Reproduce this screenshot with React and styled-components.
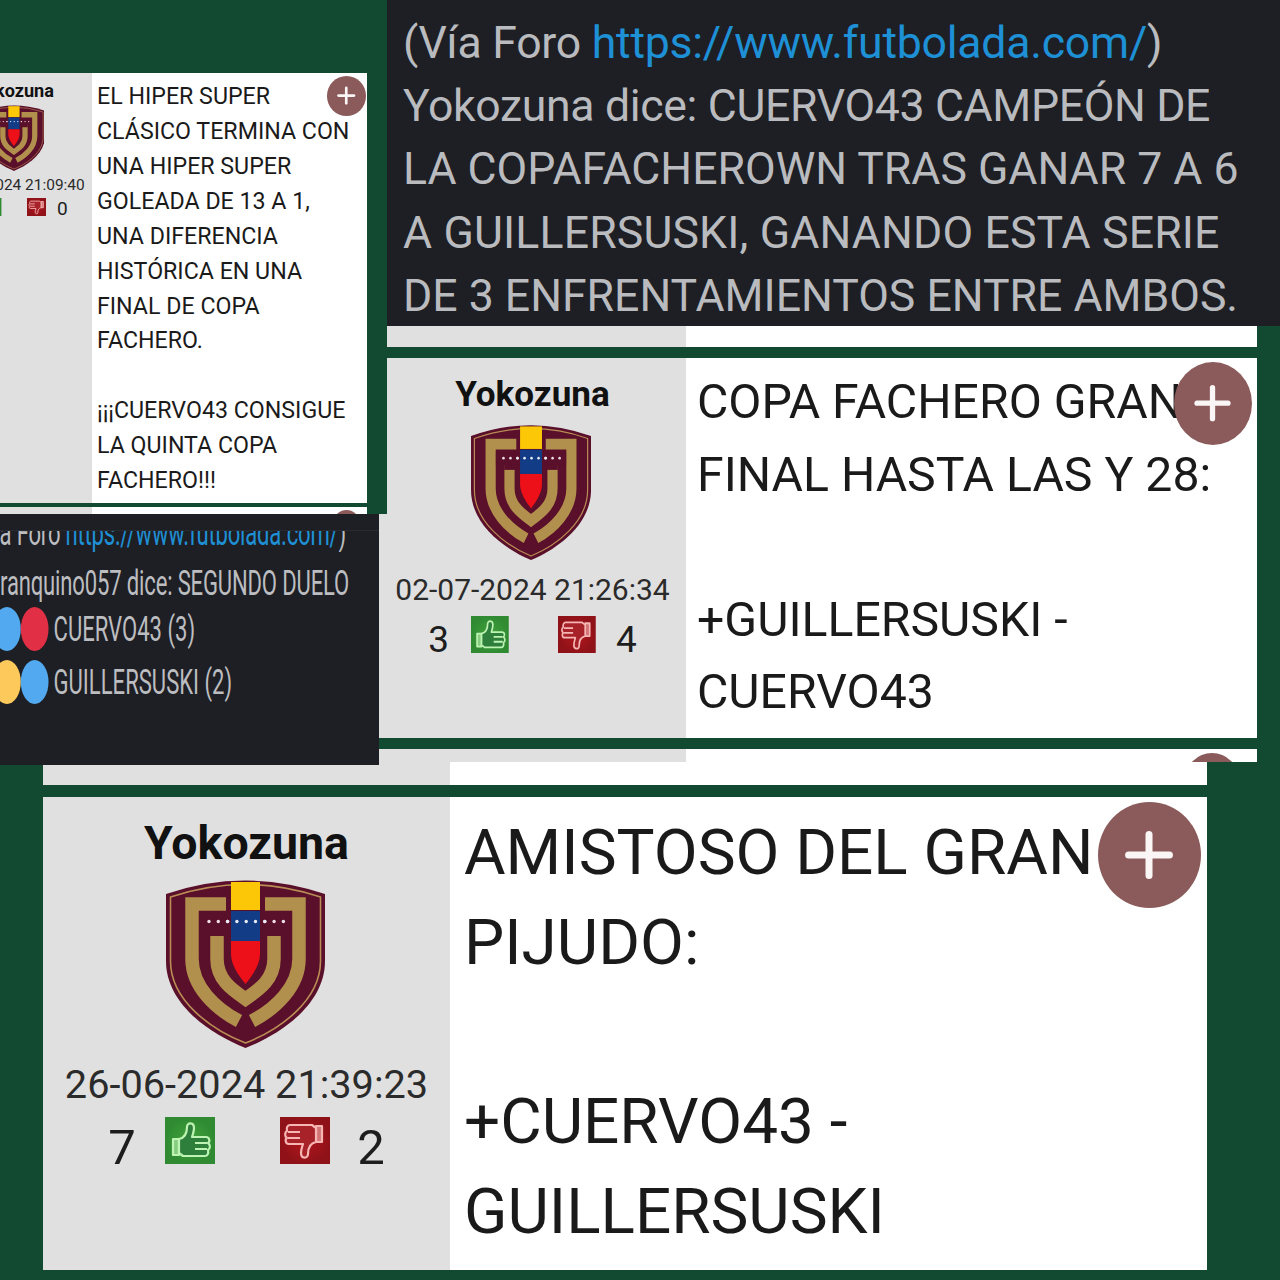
import React from 'react'
import styled, { createGlobalStyle } from 'styled-components'
import { Plus } from 'lucide-react'

const GREEN = '#114a31'

const Global = createGlobalStyle`
  html, body { margin: 0; padding: 0; background: ${GREEN}; }
  body { font-family: Roboto, "Liberation Sans", sans-serif; }
`

const Canvas = styled.div`
  position: relative;
  width: 1280px;
  height: 1280px;
  overflow: hidden;
  background: ${GREEN};
`

// every shot is one pasted screenshot of the collage, the place is the content
const Shot = styled.section`
  position: absolute;
  left: ${p => p.$x}px;
  top: ${p => p.$y}px;
  width: ${p => p.$w}px;
  height: ${p => p.$ht}px;
  z-index: ${p => p.$z};
  overflow: hidden;
  background: ${p => p.$bg || GREEN};
  display: flex;
  flex-direction: column;
  box-sizing: border-box;
`

const Strip = styled.div`
  position: relative;
  flex: none;
  height: ${p => p.$ht}px;
  margin-top: ${p => p.$gap || 0}px;
  margin-left: ${p => p.$inset || 0}px;
  width: ${p => p.$w}px;
  overflow: hidden;
  background: linear-gradient(to right, #e0e0e0 ${p => p.$col}px, #fff ${p => p.$col}px);
`

const Peek = styled.span`
  position: absolute;
  left: ${p => p.$x}px;
  top: ${p => p.$top}px;
  width: ${p => p.$d}px;
  height: ${p => p.$d}px;
  border-radius: 50%;
  background: #8b5b5b;
`

const Post = styled.article`
  --h: ${p => p.$h}px;
  --v: ${p => p.$v}px;
  position: relative;
  flex: none;
  display: grid;
  grid-template-columns: ${p => p.$col}px 1fr;
  width: ${p => p.$w}px;
  height: ${p => p.$ht}px;
  margin-top: ${p => p.$gap || 0}px;
  margin-left: ${p => p.$inset || 0}px;
  background: #fff;
`

const Side = styled.div`
  display: flex;
  flex-direction: column;
  align-items: center;
  padding-top: calc(24 * var(--v));
  background: #e0e0e0;
  min-width: 0;
`

const Name = styled.div`
  height: calc(44 * var(--v));
  line-height: calc(44 * var(--v));
  font-size: calc(46.5 * var(--h));
  font-weight: 700;
  color: #111;
  white-space: nowrap;
`

const Crest = styled.svg`
  flex: none;
  display: block;
  width: calc(159 * var(--h));
  height: calc(169 * var(--v));
  margin-top: calc(14 * var(--v));
  margin-right: calc(3 * var(--h));
`

const When = styled.div`
  height: calc(40 * var(--v));
  line-height: calc(40 * var(--v));
  margin-top: calc(17 * var(--v));
  font-size: calc(39.7 * var(--h));
  color: #2b2b2b;
  white-space: nowrap;
`

const Votes = styled.div`
  display: flex;
  align-items: center;
  justify-content: center;
  height: calc(47 * var(--v));
  margin-top: calc(12 * var(--v));
`

const Count = styled.span`
  width: calc(30 * var(--h));
  text-align: center;
  font-size: calc(49 * var(--h));
  line-height: calc(47 * var(--v));
  color: #1d1d1d;
  margin: ${p => (p.$right ? '0 0 0 calc(26 * var(--h))' : '0 calc(28 * var(--h)) 0 0')};
  position: relative;
  top: calc(7 * var(--v));
`

const VoteBox = styled.svg`
  flex: none;
  display: block;
  width: calc(50 * var(--h));
  height: calc(47 * var(--v));
  margin-left: ${p => (p.$down ? 'calc(65 * var(--h))' : '0')};
`

const Body = styled.div`
  padding: ${p => p.$pad}px 0 0 ${p => p.$left}px;
  font-size: ${p => p.$font}px;
  line-height: ${p => p.$line}px;
  color: #1a1a1a;
  white-space: pre;
  overflow: hidden;
`

const AddButton = styled.button`
  position: absolute;
  top: ${p => p.$top}px;
  right: ${p => p.$right}px;
  width: ${p => p.$dw}px;
  height: ${p => p.$dh}px;
  border: 0;
  padding: 0;
  border-radius: 50%;
  background: #8b5b5b;
  color: #fbf6f6;
  display: flex;
  align-items: center;
  justify-content: center;
  svg {
    width: 68%;
    height: 68%;
    stroke-width: 2.4;
  }
`

const BigChat = styled.div`
  padding-top: 12px;
  padding-left: 16px;
  font-size: 44.6px;
  line-height: 63.2px;
  color: #b9bbbf;
`

const BigLine = styled.div`
  white-space: pre;
  letter-spacing: ${p => p.$track || 0}px;
`

const Link = styled.a`
  color: #1e90d6;
`

const Squeezed = styled.div`
  width: 610px;
  transform: scaleX(0.63);
  transform-origin: 0 0;
  color: #bcbdc0;
  font-size: 35px;
  white-space: nowrap;
`

const ClippedLine = styled.div`
  height: 22px;
  margin: 16px 0 0 -43px;
  overflow: hidden;
  line-height: 44px;
  letter-spacing: -0.3px;
  border-top: 1px solid #2a2b30;
  box-sizing: border-box;
  div {
    margin-top: -19px;
  }
`

const ChatLine = styled.div`
  display: flex;
  align-items: center;
  height: ${p => p.$ht}px;
  margin-top: ${p => p.$gap || 0}px;
  margin-left: ${p => p.$left || 0}px;
  letter-spacing: ${p => p.$track || 0}px;
  gap: 8px;
`

const Dots = styled.span`
  display: flex;
  flex: none;
`

const Dot = styled.i`
  display: block;
  width: 44px;
  height: 44px;
  border-radius: 50%;
  background: ${p => p.$c};
`

const BLUE = '#52a9ef'
const RED = '#e12f46'
const YELLOW = '#fdc95b'

function ShieldArt() {
  const stars = Array.from({ length: 9 }, (_, i) => 43 + i * 9.3)
  const gold = '#b18f4c'
  const wine = '#5a0f2a'
  return (
    <Crest viewBox="0 0 159 169" preserveAspectRatio="none">
      <path d="M0 15Q79 -12 159 15L159 82C159 125 115 155 79.5 169C44 155 0 125 0 82Z" fill={wine} />
      <path d="M4.5 18Q79 -7 154.5 18L154.5 82C154.5 122 113 151 79.5 164C46 151 4.5 122 4.5 82Z" fill="none" stroke="#b98d55" strokeWidth="1.6" />
      <g fill="none" stroke={gold} strokeWidth="13.5">
        <path d="M60 25L26 25L26 80C26 108 50 130 73 142" />
        <path d="M99 25L133 25L133 80C133 108 109 130 86 142" />
        <path d="M51 50L51 80C51 100 65 110 79.5 120C94 110 108 100 108 80L108 50" />
      </g>
      <rect x="33" y="35" width="93" height="16" fill={wine} />
      <rect x="44" y="50" width="71" height="7" fill={wine} />
      <path d="M60 56L99 56L99 78C99 92 88 103 79.5 111C71 103 60 92 60 78Z" fill={wine} />
      {stars.map(x => (
        <circle key={x} cx={x} cy="42.5" r="1.7" fill="#f0dfe6" />
      ))}
      <rect x="65" y="3" width="29" height="28" fill="#fcc707" />
      <rect x="65" y="32" width="29" height="30" fill="#123c86" />
      {stars.slice(2, 7).map(x => (
        <circle key={x} cx={x} cy="42.5" r="1.7" fill="#e8ecf5" />
      ))}
      <path d="M65 62L94 62L94 75C94 86 86 97 79.5 105C73 97 65 86 65 75Z" fill="#ee1018" />
    </Crest>
  )
}

function ThumbBox({ down }) {
  const a = down ? '#b3161e' : '#43a33c'
  const b = down ? '#8f1218' : '#2f8a32'
  const line = down ? '#f6b6b4' : '#bdf3b3'
  const inner = down ? '#a8222a' : '#2f7f3c'
  const id = down ? 'boxDown' : 'boxUp'
  return (
    <VoteBox viewBox="0 0 50 47" preserveAspectRatio="none" $down={down}>
      <defs>
        <radialGradient id={id}>
          <stop offset="0" stopColor={a} />
          <stop offset="1" stopColor={b} />
        </radialGradient>
      </defs>
      <rect width="50" height="47" fill={`url(#${id})`} />
      <g transform={down ? 'rotate(180 25 23.5)' : undefined} stroke={line} strokeWidth="2.2" strokeLinejoin="round">
        <path d="M8 22h6v16h-6z" fill={line} fillOpacity="0.6" />
        <path
          d="M14 22C19 21 22 17 22 10C22 5 29 5 29 11C29 14 28 17 27 20L41 20C45 20 45 25 43 26C46 28 45 32 43 33C44 37 42 39 40 39L18 39L14 36Z"
          fill={inner}
        />
        <path d="M30 26L42 26M30 32L42 32" fill="none" />
      </g>
    </VoteBox>
  )
}

function ForumPost({ user, date, up, down, text, h, v, col, w, ht, gap, inset, font, line, pad, left, btn }) {
  return (
    <Post $h={h} $v={v} $col={col} $w={w} $ht={ht} $gap={gap} $inset={inset}>
      <Side>
        <Name>{user}</Name>
        <ShieldArt />
        <When>{date}</When>
        <Votes>
          <Count>{up}</Count>
          <ThumbBox />
          <ThumbBox down />
          <Count $right>{down}</Count>
        </Votes>
      </Side>
      <Body $font={font} $line={line} $pad={pad} $left={left}>{text}</Body>
      <AddButton {...btn}>
        <Plus />
      </AddButton>
    </Post>
  )
}

export default function App() {
  return (
    <Canvas>
      <Global />

      <Shot $x={379} $y={326} $w={878} $ht={436} $z={1}>
        <Strip $ht={21} $w={878} $col={307} />
        <ForumPost
          user="Yokozuna"
          date="02-07-2024 21:26:34"
          up="3"
          down="4"
          text={'COPA FACHERO GRAN\nFINAL HASTA LAS Y 28:\n\n+GUILLERSUSKI -\nCUERVO43'}
          h={0.755}
          v={0.805}
          col={307}
          w={878}
          ht={380}
          gap={11}
          font={48.2}
          line={72.6}
          pad={8}
          left={11}
          btn={{ $top: 4, $right: 5, $dw: 78, $dh: 83 }}
        />
        <Strip $ht={13} $w={878} $col={307} $gap={11}>
          <Peek $x={806} $top={4} $d={54} />
        </Strip>
      </Shot>

      <Shot $x={0} $y={762} $w={1280} $ht={518} $z={2}>
        <Strip $ht={23} $w={1164} $inset={43} $col={407} />
        <ForumPost
          user="Yokozuna"
          date="26-06-2024 21:39:23"
          up="7"
          down="2"
          text={'AMISTOSO DEL GRAN\nPIJUDO:\n\n+CUERVO43 -\nGUILLERSUSKI'}
          h={1}
          v={1}
          col={407}
          w={1164}
          ht={473}
          gap={12}
          inset={43}
          font={63.8}
          line={89.8}
          pad={11}
          left={14}
          btn={{ $top: 5, $right: 6, $dw: 103, $dh: 106 }}
        />
      </Shot>

      <Shot $x={387} $y={0} $w={893} $ht={326} $z={3} $bg="#1e1f24">
        <BigChat>
          <BigLine $track={-0.25}>(Vía Foro <Link>https://www.futbolada.com/</Link>)</BigLine>
          <BigLine $track={-0.35}>Yokozuna dice: CUERVO43 CAMPEÓN DE</BigLine>
          <BigLine>LA COPAFACHEROWN TRAS GANAR 7 A 6</BigLine>
          <BigLine $track={0.15}>A GUILLERSUSKI, GANANDO ESTA SERIE</BigLine>
          <BigLine>DE 3 ENFRENTAMIENTOS ENTRE AMBOS.</BigLine>
        </BigChat>
      </Shot>

      <Shot $x={0} $y={0} $w={387} $ht={514} $z={4}>
        <ForumPost
          user="Yokozuna"
          date="07-07-2024 21:09:40"
          up="5"
          down="0"
          text={'EL HIPER SUPER\nCLÁSICO TERMINA CON\nUNA HIPER SUPER\nGOLEADA DE 13 A 1,\nUNA DIFERENCIA\nHISTÓRICA EN UNA\nFINAL DE COPA\nFACHERO.\n\n¡¡¡CUERVO43 CONSIGUE\nLA QUINTA COPA\nFACHERO!!!'}
          h={0.389}
          v={0.39}
          col={156}
          w={431}
          ht={430}
          gap={73}
          inset={-64}
          font={23.2}
          line={34.92}
          pad={6}
          left={5}
          btn={{ $top: 3, $right: 1, $dw: 39, $dh: 40 }}
        />
        <Strip $ht={7} $w={367} $col={92} $gap={4}>
          <Peek $x={333} $top={3} $d={27} />
        </Strip>
      </Shot>

      <Shot $x={0} $y={514} $w={379} $ht={251} $z={5} $bg="#1e1f24">
        <Squeezed>
          <ClippedLine>
            <div>(Vía Foro <Link>https://www.futbolada.com/</Link>)</div>
          </ClippedLine>
          <ChatLine $ht={42} $gap={10} $track={-0.25}>ranquino057 dice: SEGUNDO DUELO</ChatLine>
          <ChatLine $ht={50} $left={-11}>
            <Dots><Dot $c={BLUE} /><Dot $c={RED} /></Dots>
            CUERVO43 (3)
          </ChatLine>
          <ChatLine $ht={56} $left={-11}>
            <Dots><Dot $c={YELLOW} /><Dot $c={BLUE} /></Dots>
            GUILLERSUSKI (2)
          </ChatLine>
        </Squeezed>
      </Shot>
    </Canvas>
  )
}
